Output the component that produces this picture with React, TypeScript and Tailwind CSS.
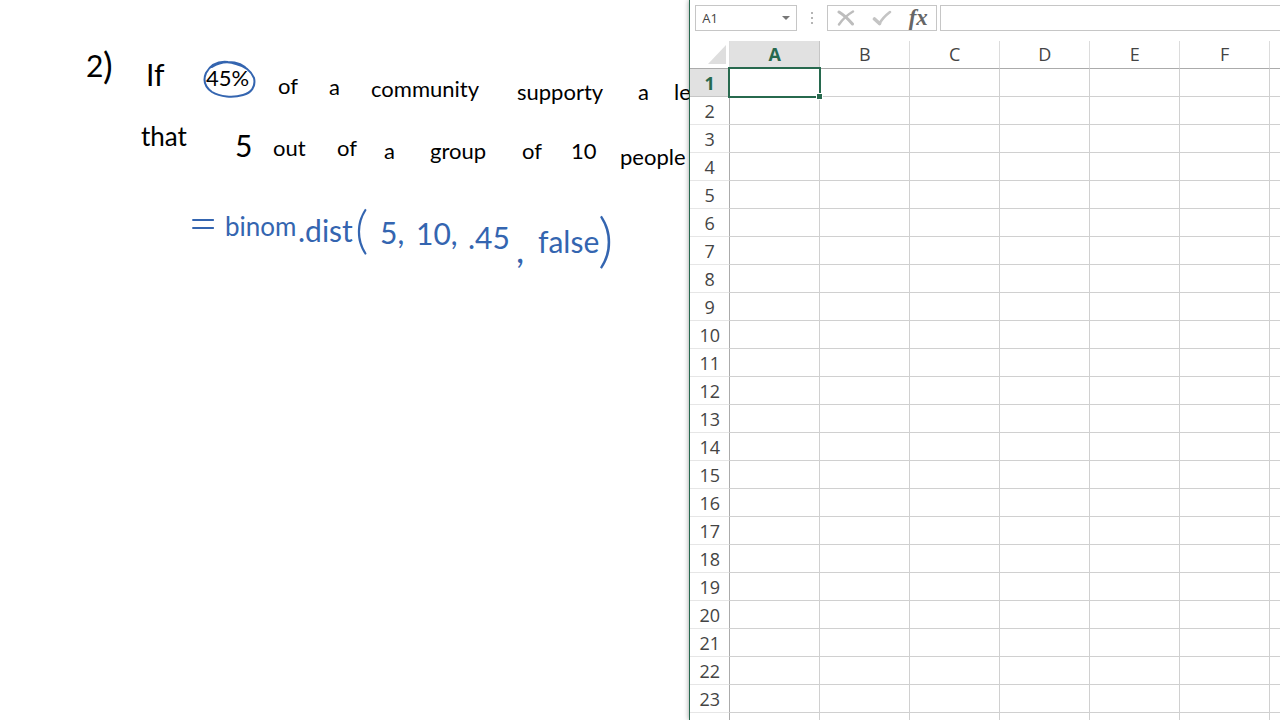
const columns = ["A", "B", "C", "D", "E", "F", "G"]
const rows = Array.from({ length: 24 }, (_, i) => i + 1)

const blackInk = [
    { text: "2", place: "left-[86px] top-[49px] text-[30px]" },
    { text: ")", place: "left-[103px] top-[49px] text-[36px]" },
    { text: "If", place: "left-[146px] top-[58px] text-[30px]" },
    { text: "45%", place: "left-[206px] top-[62px] text-[22px]" },
    { text: "of", place: "left-[278px] top-[70px] text-[22px]" },
    { text: "a", place: "left-[329px] top-[71px] text-[22px]" },
    { text: "community", place: "left-[371px] top-[73px] text-[22px]" },
    { text: "supporty", place: "left-[517px] top-[76px] text-[22px]" },
    { text: "a", place: "left-[638px] top-[76px] text-[22px]" },
    { text: "le", place: "left-[674px] top-[76px] text-[22px]" },
    { text: "that", place: "left-[141px] top-[120px] text-[26px]" },
    { text: "5", place: "left-[235px] top-[129px] text-[30px]" },
    { text: "out", place: "left-[273px] top-[132px] text-[22px]" },
    { text: "of", place: "left-[337px] top-[132px] text-[22px]" },
    { text: "a", place: "left-[384px] top-[135px] text-[22px]" },
    { text: "group", place: "left-[430px] top-[135px] text-[22px]" },
    { text: "of", place: "left-[522px] top-[135px] text-[22px]" },
    { text: "10", place: "left-[571px] top-[135px] text-[22px]" },
    { text: "people", place: "left-[620px] top-[141px] text-[22px]" },
]

const blueInk = [
    { text: "=", place: "left-[188px] top-[205px] text-[52px] font-light" },
    { text: "binom", place: "left-[225px] top-[210px] text-[26px]" },
    { text: ".dist", place: "left-[298px] top-[214px] text-[30px]" },
    { text: "(", place: "left-[355px] top-[212px] text-[52px] font-light" },
    { text: "5,", place: "left-[380px] top-[216px] text-[30px]" },
    { text: "10,", place: "left-[416px] top-[217px] text-[30px]" },
    { text: ".45", place: "left-[468px] top-[221px] text-[30px]" },
    { text: ",", place: "left-[516px] top-[233px] text-[36px]" },
    { text: "false", place: "left-[538px] top-[225px] text-[30px]" },
    { text: ")", place: "left-[598px] top-[222px] text-[60px] font-light" },
]

function Notes() {
    return (
        <section className="relative overflow-hidden bg-white font-['Lato',sans-serif] leading-8 whitespace-nowrap">
            <p className="text-black">
                {blackInk.map((word, i) => (
                    <span key={i} className={`absolute ${word.place}`}>{word.text}</span>
                ))}
            </p>
            <p className="text-[#3465b0]">
                {blueInk.map((word, i) => (
                    <span key={i} className={`absolute ${word.place}`}>{word.text}</span>
                ))}
            </p>
            <svg className="absolute left-[202px] top-[58px]" width="56" height="42" viewBox="0 0 56 42" fill="none" stroke="#3465b0" strokeWidth="2" strokeLinecap="round" aria-hidden="true">
                <path d="M10 9C18 4 26 3 34 6C43 8 49 13 52 20C54 29 49 35 41 37C31 40 18 39 10 34C3 29 1 22 4 15C9 6 17 3 26 4C36 4 43 8 47 13" />
            </svg>
        </section>
    )
}

function FormulaBar() {
    return (
        <div className="flex h-[26px] mt-[5px] mb-[10px] ml-[5px] text-[#444]">
            <div className="flex w-[102px] border border-[#c6c6c6]">
                <input aria-label="Name Box" defaultValue="A1" className="w-0 flex-1 pt-0.5 pl-1.5 text-[13px] outline-none" />
                <button aria-label="Open name list" className="w-5 flex items-center justify-center">
                    <svg width="8" height="4" viewBox="0 0 8 4"><path d="M0 0H8L4 4Z" fill="#777" /></svg>
                </button>
            </div>
            <div className="w-[30px] flex flex-col items-center justify-center gap-[3px]">
                <span className="size-0.5 bg-[#b5b5b5]" />
                <span className="size-0.5 bg-[#b5b5b5]" />
                <span className="size-0.5 bg-[#b5b5b5]" />
            </div>
            <div className="w-[110px] flex items-stretch border border-[#c6c6c6]">
                <button aria-label="Cancel" className="flex-1 flex items-center justify-center">
                    <svg width="18" height="16" viewBox="0 0 18 16" fill="none" stroke="#bdbdbd" strokeLinecap="round">
                        <path d="M2 2C7 5 12 10 15.5 14" strokeWidth="3" />
                        <path d="M16 1.5C10 5 5 10 2 14.5" strokeWidth="2.4" />
                    </svg>
                </button>
                <button aria-label="Enter" className="flex-1 flex items-center justify-center">
                    <svg width="20" height="16" viewBox="0 0 20 16" fill="none" stroke="#c4c4c4" strokeLinecap="round" strokeLinejoin="round">
                        <path d="M2.5 9L7.5 13.5" strokeWidth="3.6" />
                        <path d="M7.5 13.5C10 9 14 5 18 2" strokeWidth="2.6" />
                    </svg>
                </button>
                <button aria-label="Insert Function" className="flex-1 flex items-center justify-center pb-0.5 font-['Liberation_Serif',serif] italic font-bold text-[23px] leading-none text-[#666]">fx</button>
            </div>
            <input aria-label="Formula" className="ml-[3px] min-w-0 flex-1 border border-r-0 border-[#c6c6c6] px-2 outline-none" />
        </div>
    )
}

function Sheet() {
    return (
        <table className="w-[670px] table-fixed border-separate border-spacing-0 text-[18px] leading-[25px] text-[#444]">
            <thead>
                <tr className="h-7">
                    <th aria-label="Select all" className="w-10 p-0 border-r border-b border-r-[#dcdcdc] border-b-[#ababab]">
                        <svg className="ml-auto mr-[3px]" width="18" height="19" viewBox="0 0 18 19"><path d="M18 0V19H0Z" fill="#dedede" /></svg>
                    </th>
                    {columns.map((name) => (
                        <th
                            key={name}
                            scope="col"
                            className={name === "A"
                                ? "w-[90px] p-0 border-r border-b border-r-[#c6c6c6] border-b-[#ababab] bg-[#e1e1e1] font-bold text-[#27694e]"
                                : "w-[90px] p-0 border-r border-b border-r-[#dcdcdc] border-b-[#ababab] font-normal"}
                        >
                            {name}
                        </th>
                    ))}
                </tr>
            </thead>
            <tbody>
                {rows.map((row) => (
                    <tr key={row} className="h-7">
                        <th
                            scope="row"
                            className={row === 1
                                ? "p-0 pt-0.5 border-r border-b border-r-[#ababab] border-b-[#c6c6c6] bg-[#e1e1e1] font-bold text-[#27694e]"
                                : "p-0 pt-0.5 border-r border-b border-r-[#ababab] border-b-[#e6e6e6] font-normal"}
                        >
                            {row}
                        </th>
                        {columns.map((name) => (
                            <td key={name} className="relative p-0 border-r border-b border-[#d0d0d0]">
                                {row === 1 && name === "A" && (
                                    <div className="absolute -inset-0.5 z-10 border-2 border-[#27694e]">
                                        <span className="absolute -right-1 -bottom-1 size-[7px] border border-white bg-[#27694e]" />
                                    </div>
                                )}
                            </td>
                        ))}
                    </tr>
                ))}
            </tbody>
        </table>
    )
}

export default function App() {
    return (
        <main className="grid h-screen grid-cols-[7fr_6fr] grid-rows-1 overflow-hidden">
            <Notes />
            <section className="relative min-w-0 overflow-x-clip border-l border-[#27694e] bg-white font-['Open_Sans',sans-serif] shadow-[0_0_5px_rgba(0,0,0,0.4)]">
                <FormulaBar />
                <Sheet />
            </section>
        </main>
    )
}
